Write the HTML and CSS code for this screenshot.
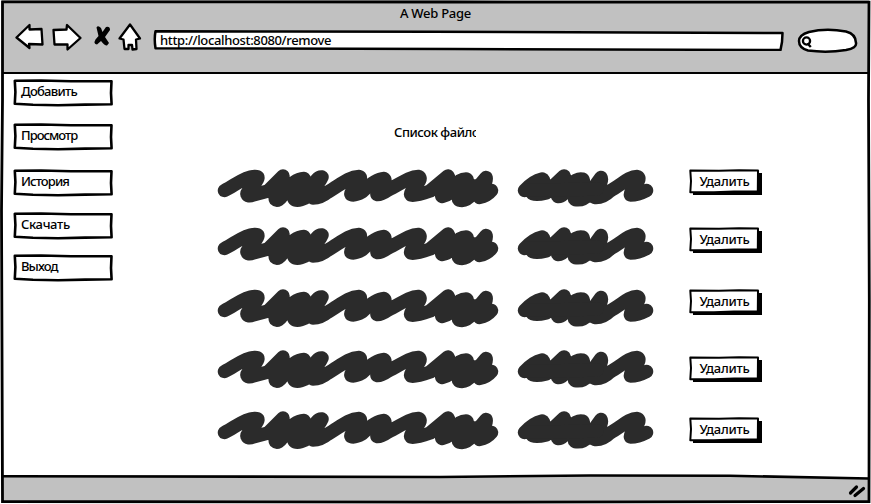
FILE: index.html
```html
<!DOCTYPE html>
<html lang="ru">
<head>
<meta charset="utf-8">
<title>A Web Page</title>
<link rel="stylesheet" href="styles.css">
</head>
<body>
<svg class="defs" aria-hidden="true">
  <symbol id="box" viewBox="0 0 100 28">
    <path d="M1.8 1.8 L28 1.5 L58 2.3 L98.500 2.2 L98 14 L98.6 25.3 L72 25.6 L45 26.300 L20 25.8 L1.8 24.8 L2.4 13Z" fill="#fff" stroke="#000" stroke-width="2.6" stroke-linejoin="round"/>
  </symbol>
  <symbol id="btn" viewBox="0 0 74 27">
    <path d="M4 4H73V26H4Z" fill="#000"/>
    <path d="M1.3 1.6 L30 1.8 L50 1.3 L69 1.6 L68.8 22.500 L45 22.500 L25 23.300 L1.3 23.2 L2 12Z" fill="#fff" stroke="#000" stroke-width="2" stroke-linejoin="round"/>
  </symbol>
  <symbol id="long" viewBox="0 0 282 40">
    <path class="ink" d="M7.500 22.500C17 18 27 9 37 8.500C43 8 41 11 38 15Q29 25 30 26Q31 29 36 27L51 23L66 8C66 13 56 28 58.500 31.500Q61 34 66 27Q76 11 87 10.500C91 14 76 26 77 31C80 34 88 31 92 27Q103 14 105 9C97 8 92 28 96 30Q104 30 111 24C122 18 131 9 142 8.500C148 10 132 24 134 26.500Q138 28 145 24Q158 11 167 10.500C171 14 159 25 160 26.500Q164 27 171 22C182 17 192 8.500 201 8.500C209 10 191 24 194 27Q199 28 213 23L231 8C234 12 221 27 225.500 28.500Q233 27 235 20Q242 11 249 11C255 13 238 28 242 32Q249 34 255 26L269 9.500C271 14 259 27 262.500 29.500Q270 28 274.500 22.500L258 18L236 20"/>
  </symbol>
  <symbol id="short" viewBox="0 0 138 40">
    <path class="ink" d="M7.500 22.500Q16 13 25 11C31 13 18 23 15 25Q17 28 29 25L47 8C50 13 38 26 41 28.500Q47 29 52 17Q60 10 65 11C71 13 54 28 58 31.500Q66 33 72 26L84 9.500C87 14 74 28 78 29.500Q86 30 93 23C104 17 112 8.500 120 8.500C127 10 112 23 113.500 27Q121 27 129.500 22.500"/>
    <path class="ink" d="M9 22L34 22L80 21"/>
  </symbol>
</svg>
<div class="window">
  <header class="chrome">
    <h1 class="title"><span>A Web Page</span></h1>
    <div class="bar">
      <svg class="nav" viewBox="0 0 130 32">
        <g fill="#fff" stroke="#000" stroke-width="2.300" stroke-linejoin="round">
          <path d="M1.500 15.500L14.500 3L14.500 7.500L26.500 7L27.500 22.500L14 22L14.500 26Z"/>
          <path d="M65.500 16L52 3L51.500 7.500L38.500 8L39.500 22.500L52.500 22.500L52.500 27.500Z"/>
          <path d="M115 2.500L104.500 16.500L108.500 17.500L109.500 27L113.500 27L113.500 23L117 23L117.500 27.500L121.500 27L121 17.500L125 16.500Z"/>
        </g>
        <path d="M81.500 5.500Q83 3 86 6L87.500 10L91 5Q95 4 95 8L90 15L94 21L92 23.500Q90 24 86 19L82 22.500Q78 22 80.500 17.500L83.500 14Z" fill="#000"/>
      </svg>
      <div class="url">
        <svg class="sketch" viewBox="0 0 632 22"><path d="M2.500 2.200L130 2.500L280 2.800L629.500 4L629 13L627.500 21L300 20L2.500 19.200Q1 10 2.500 2.200Z" fill="#fff" stroke="#000" stroke-width="2.500" stroke-linejoin="round"/></svg>
        <span>http://localhost:8080/remove</span>
      </div>
      <svg class="search" viewBox="0 0 62 26">
        <path d="M12 4Q29 0 49 3.500Q59 6 59 15Q60 20 49 22Q30 25 11 22.500Q2 20 2 13Q2 7 12 4Z" fill="#fff" stroke="#000" stroke-width="2.500"/>
        <circle cx="9.500" cy="13" r="3.600" fill="#fff" stroke="#000" stroke-width="2.300"/>
        <path d="M10.500 15.500L13.800 19" stroke="#000" stroke-width="2.500"/>
      </svg>
    </div>
  </header>
  <div class="page">
    <nav class="menu">
      <a><svg class="sketch"><use href="#box"/></svg><span class="w1">Добавить</span></a>
      <a><svg class="sketch"><use href="#box"/></svg><span class="w2">Просмотр</span></a>
      <a><svg class="sketch"><use href="#box"/></svg><span class="w3">История</span></a>
      <a><svg class="sketch"><use href="#box"/></svg><span class="w4">Скачать</span></a>
      <a><svg class="sketch"><use href="#box"/></svg><span class="w5">Выход</span></a>
    </nav>
    <main class="content">
      <h2 class="heading">Список файлo</h2>
      <div class="files">
        <div class="row"><svg class="long"><use href="#long"/></svg><svg class="short"><use href="#short"/></svg><button><svg class="sketch"><use href="#btn"/></svg><span>Удалить</span></button></div>
        <div class="row"><svg class="long"><use href="#long"/></svg><svg class="short"><use href="#short"/></svg><button><svg class="sketch"><use href="#btn"/></svg><span>Удалить</span></button></div>
        <div class="row"><svg class="long"><use href="#long"/></svg><svg class="short"><use href="#short"/></svg><button><svg class="sketch"><use href="#btn"/></svg><span>Удалить</span></button></div>
        <div class="row low"><svg class="long"><use href="#long"/></svg><svg class="short"><use href="#short"/></svg><button><svg class="sketch"><use href="#btn"/></svg><span>Удалить</span></button></div>
        <div class="row low"><svg class="long"><use href="#long"/></svg><svg class="short"><use href="#short"/></svg><button><svg class="sketch"><use href="#btn"/></svg><span>Удалить</span></button></div>
      </div>
    </main>
  </div>
  <footer>
    <svg viewBox="0 0 871 30">
      <path d="M2 2.200L440 3L590 1.500L730 1.800L869 4.500V28H2Z" fill="#c1c1c1"/>
      <path d="M2 2.200L440 3L590 1.500L730 1.800L869 4.500" fill="none" stroke="#000" stroke-width="2.600"/>
      <path d="M850.500 19L856.500 13M855 21.500L863.500 14.500" stroke="#000" stroke-width="3.200" stroke-linecap="round"/>
    </svg>
  </footer>
  <svg class="frame" viewBox="0 0 871 504"><path d="M2.500 1.800L450 2L869 2.200L868.500 100L869.300 300L869 501.500L440 502.200L2.500 501.500L2 350L1.500 210L2.500 100Z" fill="none" stroke="#000" stroke-width="2.800"/></svg>
</div>
</body>
</html>
```
FILE: styles.css
```css
* { box-sizing: border-box; }
body {
  margin: 0;
  background: #fff;
  color: #000;
  font: 500 13px/16px "Noto Sans", sans-serif;
}
.defs { position: absolute; width: 0; height: 0; }
.ink {
  fill: none;
  stroke: #2b2b2b;
  stroke-width: 13.5;
  stroke-linecap: round;
  stroke-linejoin: round;
}
.window {
  position: relative;
  display: flex;
  flex-direction: column;
  width: 871px;
  height: 504px;
  overflow: hidden;
}
.frame { position: absolute; inset: 0; width: 871px; height: 504px; pointer-events: none; }
.sketch { position: absolute; inset: 0; width: 100%; height: 100%; }
span { position: relative; white-space: nowrap; }

.chrome {
  height: 74px;
  margin: 0 2px;
  padding-top: 5px;
  background: #c1c1c1;
  border-bottom: 2.5px solid #000;
}
.title { margin: 0 0 1px; font: inherit; text-align: center; letter-spacing: -.25px; }
.bar { display: flex; align-items: flex-start; padding-left: 13px; }
.nav { width: 130px; height: 32px; flex: none; }
.url {
  position: relative;
  width: 632px;
  height: 22px;
  margin: 7px 0 0 8px;
  padding: 4px 0 0 7px;
  letter-spacing: -.36px;
  line-height: 15px;
}
.search { width: 62px; height: 26px; margin: 6px 0 0 12px; }

.page { flex: 1; display: flex; }
.menu { width: 205px; padding: 5px 0 0 13px; }
.menu a {
  position: relative;
  display: block;
  width: 100px;
  height: 28px;
  margin-bottom: 16px;
  padding: 4px 0 0 8px;
}
.menu a:nth-child(2) { margin-bottom: 18px; }
.menu a:nth-child(3) { margin-bottom: 15px; }
.menu a:nth-child(4) { margin-bottom: 14px; }
.w1 { letter-spacing: -.75px; }
.w2 { letter-spacing: -1px; }
.w3 { letter-spacing: -.9px; }
.w4 { letter-spacing: -.35px; }
.w5 { letter-spacing: -.9px; }

.content { padding: 50px 0 0 12px; }
.heading {
  width: 82px;
  height: 16px;
  margin: 0 0 0 177px;
  overflow: hidden;
  white-space: nowrap;
  font: inherit;
  letter-spacing: -.45px;
}
.files { padding-top: 28px; }
.row { display: flex; height: 40px; margin-bottom: 22px; }
.row:first-child { margin-bottom: 18px; }
.row:nth-child(n+3) { margin-bottom: 21px; }
.long { width: 282px; height: 40px; }
.short { width: 138px; height: 40px; margin-left: 18px; }
.row button {
  position: relative;
  width: 74px;
  height: 27px;
  margin: 1px 0 0 34px;
  padding: 0 3px 3px 0;
  border: 0;
  background: none;
  color: inherit;
  font: inherit;
  letter-spacing: -.25px;
}
.low button { margin-top: 7px; }
footer { height: 30px; margin-top: auto; }
footer svg { display: block; width: 871px; height: 30px; }
```
